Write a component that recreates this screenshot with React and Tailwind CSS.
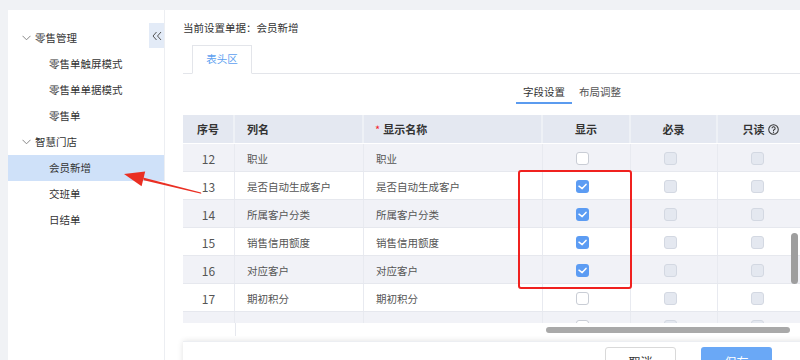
import React from "react";

const menu = [
  { label: "零售管理", level: 0 },
  { label: "零售单触屏模式", level: 1 },
  { label: "零售单单据模式", level: 1 },
  { label: "零售单", level: 1 },
  { label: "智慧门店", level: 0 },
  { label: "会员新增", level: 1, active: true },
  { label: "交班单", level: 1 },
  { label: "日结单", level: 1 },
];

const rows = [
  { no: "12", name: "职业", show: false },
  { no: "13", name: "是否自动生成客户", show: true },
  { no: "14", name: "所属客户分类", show: true },
  { no: "15", name: "销售信用额度", show: true },
  { no: "16", name: "对应客户", show: true },
  { no: "17", name: "期初积分", show: false },
  { no: "", name: "", show: false },
];

const Check = ({ type }) => {
  if (type === "on")
    return (
      <span className="w-[13px] h-[13px] rounded-[3px] bg-[#5c9cf3] flex items-center justify-center">
        <svg width="9" height="7" viewBox="0 0 9 7">
          <polyline points="1,3.2 4.2,5.6 8,1.4" fill="none" stroke="#fff" strokeWidth="1.5" strokeLinecap="round" strokeLinejoin="round" />
        </svg>
      </span>
    );
  if (type === "off")
    return <span className="w-[13px] h-[13px] rounded-[3px] bg-white border border-[#c9cdd5]" />;
  return <span className="w-[13px] h-[13px] rounded-[3px] bg-[#e4e8f0] border border-[#d3d8e2]" />;
};

const App = () => {
  return (
    <div className="w-[800px] h-[360px] overflow-hidden relative flex bg-[#f0f2f5] pt-[10px] pl-[8px] text-[10.5px] text-[#333] font-['Noto_Sans_CJK_SC','Liberation_Sans',sans-serif]">
      {/* Sidebar */}
      <div className="w-[157px] shrink-0 h-full bg-white border-r border-[#eceef2] relative pt-[15px]">
        <div className="absolute right-0 top-[13px] w-[15px] h-[25px] bg-[#e3ebf7] flex items-center justify-center">
          <svg width="10" height="10" viewBox="0 0 10 10">
            <polyline points="4.5,1 1,5 4.5,9" fill="none" stroke="#555" strokeWidth="1" />
            <polyline points="9,1 5.5,5 9,9" fill="none" stroke="#555" strokeWidth="1" />
          </svg>
        </div>
        {menu.map((m, i) => (
          <div
            key={i}
            className={`h-[26px] flex items-center leading-none ${m.active ? "bg-[#cfe1f9]" : ""} ${m.level === 0 ? "pl-[14px]" : "pl-[41px]"}`}
          >
            {m.level === 0 && (
              <svg width="9" height="6" viewBox="0 0 9 6" className="mr-[4px]">
                <polyline points="0.5,0.8 4.5,4.8 8.5,0.8" fill="none" stroke="#888" strokeWidth="1" />
              </svg>
            )}
            <span>{m.label}</span>
          </div>
        ))}
      </div>

      {/* Main */}
      <div className="flex-1 min-w-0 bg-white pl-[18px] pt-[10px] flex flex-col">
        <div className="h-[16px] shrink-0 leading-[16px]">当前设置单据：会员新增</div>

        <div className="mt-[9px] h-[29px] shrink-0 flex border-b border-[#e3e5ea] w-[640px]">
          <div className="ml-[9px] w-[60px] h-[29px] bg-white border border-[#e3e5ea] border-b-white flex items-center justify-center text-[#5e9ff0] leading-none">
            表头区
          </div>
        </div>

        <div className="mt-[8px] h-[22px] shrink-0 flex ml-[333px] leading-none">
          <div className="px-[7px] flex items-center border-b-2 border-[#5b9bef]">字段设置</div>
          <div className="px-[7px] flex items-center text-[#555] pb-[2px]">布局调整</div>
        </div>

        {/* Table */}
        <div className="mt-[11px] w-[617px] shrink-0 relative overflow-hidden">
          <div className="h-[29px] flex bg-[#e4e8f1] border-b border-white font-bold text-[11px] text-[#333] leading-none w-[640px]">
            <div className="w-[52px] shrink-0 flex items-center justify-center border-r-2 border-[#eef1f6]">序号</div>
            <div className="w-[129px] shrink-0 flex items-center pl-[12px] border-r-2 border-[#eef1f6]">列名</div>
            <div className="w-[179px] shrink-0 flex items-center pl-[11px] border-r-2 border-[#eef1f6]">
              <span className="text-[#f5222d] mr-[3px] font-normal">*</span>显示名称
            </div>
            <div className="w-[88px] shrink-0 flex items-center justify-center border-r-2 border-[#eef1f6]">显示</div>
            <div className="w-[87px] shrink-0 flex items-center justify-center border-r-2 border-[#eef1f6]">必录</div>
            <div className="w-[87px] shrink-0 flex items-center justify-center pr-[2px]">
              只读
              <svg width="11" height="11" viewBox="0 0 12 12" className="ml-[3px]">
                <circle cx="6" cy="6" r="5.2" fill="none" stroke="#333" strokeWidth="1.1" />
                <path d="M4.4 4.7a1.7 1.7 0 1 1 2.3 1.5c-.5.2-.7.5-.7 1v.4" fill="none" stroke="#333" strokeWidth="1.1" />
                <circle cx="6" cy="9" r="0.7" fill="#333" />
              </svg>
            </div>
          </div>

          <div className="h-[179px] overflow-hidden">
            {rows.map((r, i) => (
              <div
                key={i}
                className={`h-[28px] flex border-b border-[#e6e8ee] w-[640px] text-[#555] leading-none ${i % 2 === 0 ? "bg-[#f1f2f7]" : "bg-white"}`}
              >
                <div className="w-[52px] shrink-0 flex items-center justify-center pt-[3px] border-r border-[#e8eaf0] text-[12px]">{r.no}</div>
                <div className="w-[129px] shrink-0 flex items-center pl-[12px] pt-[3px] border-r border-[#e8eaf0]">{r.name}</div>
                <div className="w-[179px] shrink-0 flex items-center pl-[12px] pt-[3px] border-r border-[#e8eaf0]">{r.name}</div>
                <div className="w-[88px] shrink-0 flex items-center justify-center pr-[8px] pt-[1px] border-r border-[#e8eaf0]">
                  <Check type={r.show ? "on" : "off"} />
                </div>
                <div className="w-[87px] shrink-0 flex items-center justify-center pr-[8px] pt-[1px] border-r border-[#e8eaf0]">
                  <Check type="dis" />
                </div>
                <div className="w-[87px] shrink-0 flex items-center justify-center pr-[8px] pt-[1px]">
                  <Check type="dis" />
                </div>
              </div>
            ))}
          </div>

          <div className="h-[13px] flex items-center bg-white">
            <div className="w-[53px] h-full shrink-0 border-r border-[#e6e8ee]" />
            <div className="ml-[310px] w-[244px] h-[6px] rounded-full bg-[#a9a9a9]" />
          </div>

          {/* vertical scrollbar */}
          <div className="absolute right-[2px] top-[118px] w-[7px] h-[51px] rounded-full bg-[#9e9e9e]" />
        </div>

        {/* Footer */}
        <div className="mt-[5px] w-[640px] h-[40px] shrink-0 bg-white shadow-[0_0_6px_rgba(0,0,0,0.12)] border-t border-[#eceef2] pt-[5px] flex leading-none">
          <div className="ml-[422px] w-[71px] h-[30px] border border-[#d9d9d9] rounded-[3px] flex items-center justify-center text-[12px] text-[#333]">取消</div>
          <div className="ml-[25px] w-[71px] h-[30px] bg-[#6aa8f6] rounded-[3px] flex items-center justify-center text-[12px] text-white">保存</div>
        </div>
      </div>

      {/* annotation: red box */}
      <div className="absolute left-[518px] top-[170px] w-[114px] h-[119px] border-2 border-[#f0211f] rounded-[3px] pointer-events-none" />

      {/* annotation: red arrow */}
      <svg className="absolute left-0 top-0 pointer-events-none" width="800" height="360" viewBox="0 0 800 360">
        <polygon points="201,192.5 201.3,193.7 143.8,180.3 143.0,177.4" fill="#ea2f23" />
        <polygon points="124,174 145.2,171.6 141.6,186.2" fill="#ea2f23" />
      </svg>
    </div>
  );
};

export default App;
